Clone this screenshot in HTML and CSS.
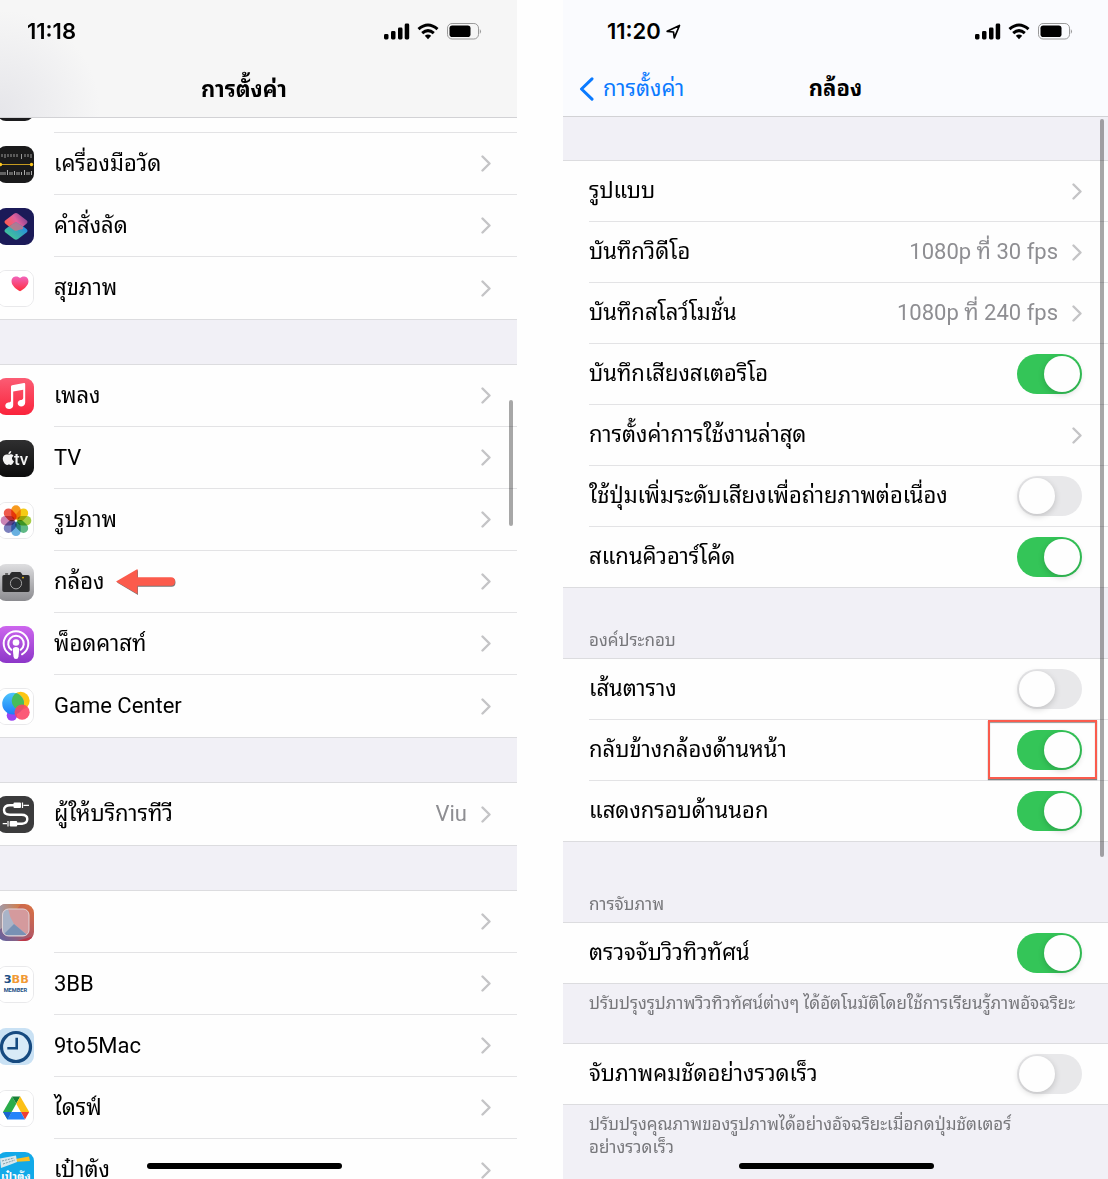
FILE: index.html
```html
<!DOCTYPE html>
<html lang="th">
<head>
    <meta charset="UTF-8">
    <meta name="viewport" content="width=device-width, initial-scale=1.0">
    <title>การตั้งค่ากล้อง</title>
    <link rel="stylesheet" href="styles.css">
</head>
<body>
    <!-- shared symbols -->
    <svg class="defs" width="0" height="0" aria-hidden="true">
        <symbol id="status" viewBox="0 0 98 18">
            <rect x="0" y="12" width="4.500" height="5.500" rx="1.400"/>
            <rect x="7" y="9" width="4.500" height="8.500" rx="1.400"/>
            <rect x="14" y="5.500" width="4.500" height="12" rx="1.400"/>
            <rect x="20.700" y="1.500" width="4.500" height="16" rx="1.400"/>
            <g fill="none" stroke="#000" stroke-width="3">
                <path d="M34.500 7.200Q44 -1.200 53.500 7.200"/>
                <path d="M38.200 11.100Q44 6.100 49.800 11.100"/>
            </g>
            <path d="M40.800 13.700Q44 11.200 47.200 13.700L44 17.300Z"/>
            <rect x="63.500" y="1.500" width="31" height="15.500" rx="4.600" fill="none" stroke="#999"/>
            <rect x="65.500" y="3.500" width="21" height="11.500" rx="2.800"/>
            <path d="M95.800 7Q98.200 9.500 95.800 12Z" fill="#999"/>
        </symbol>
        <symbol id="chevron" viewBox="0 0 10 17">
            <path d="M1.500 1.500L8.500 8.500L1.500 15.500" fill="none" stroke="#c4c4c6" stroke-width="2.400" stroke-linecap="round" stroke-linejoin="round"/>
        </symbol>
    </svg>

    <!-- main settings list -->
    <section class="phone phone-list">
        <header class="topbar">
            <div class="status">
                <span class="time">11:18</span>
                <svg class="status-icons" aria-hidden="true"><use href="#status"/></svg>
            </div>
            <div class="nav"><h1>การตั้งค่า</h1></div>
        </header>
        <nav class="content">
            <ul class="group group-first">
                <li class="row">
                    <svg class="app-icon" viewBox="0 0 37 37"><rect width="37" height="37" fill="#1c1c1e"/></svg>
                    <div class="cell"></div>
                </li>
                <li class="row">
                    <svg class="app-icon" viewBox="0 0 37 37">
                        <rect width="37" height="37" fill="#1a1a1b"/>
                        <path d="M5 8v3M8 8v4M11 8v3M14 8v3M17 8v3M20 8v3M24.500 8v5M28 8v3M31 8v3M34 8v4" stroke="#999"/>
                        <path d="M3 18.500H35" stroke="#c59a20" stroke-width="1"/>
                        <circle cx="3.500" cy="18.500" r="1.700" fill="#ffc81f"/>
                        <circle cx="34.500" cy="18.500" r="1.700" fill="#ffc81f"/>
                        <path d="M4 26v3M6 26v3M8 26v3M10.500 24v5M13 26v3M15 26v3M17.500 25v4M20 26v3M22 26v3M24.500 26v3M27.500 24v5M30 26v3M32 26v3M34.500 25v4" stroke="#aaa"/>
                    </svg>
                    <a class="cell" href="#">เครื่องมือวัด<svg class="chevron"><use href="#chevron"/></svg></a>
                </li>
                <li class="row">
                    <svg class="app-icon" viewBox="0 0 37 37">
                        <defs>
                            <linearGradient id="sc1" x1="0" y1=".7" x2="1" y2=".3"><stop offset="0" stop-color="#ff5a50"/><stop offset=".5" stop-color="#e0609d"/><stop offset="1" stop-color="#7a3f90"/></linearGradient>
                            <linearGradient id="sc2" x1="0" y1="1" x2="1" y2="0"><stop offset="0" stop-color="#4ad38b"/><stop offset=".5" stop-color="#35a8b8"/><stop offset="1" stop-color="#1b7bff"/></linearGradient>
                        </defs>
                        <rect width="37" height="37" fill="#1b1a58"/>
                        <path d="M17 14.500Q19 13 21 14.500L29.500 21Q31.500 22.800 29.500 24.500L21 31Q19 32.500 17 31L8.500 24.500Q6.500 22.800 8.500 21Z" fill="url(#sc2)"/>
                        <path d="M17 5.800Q19 4.300 21 5.800L29.500 12.300Q31.500 14 29.500 15.800L26 18.500L19 14L12 18.500L8.500 15.800Q6.500 14 8.500 12.300Z" fill="url(#sc1)"/>
                        <path d="M12 18.500L19 14L26 18.500L26 21L21 22.300Q19 23.300 17 22.300Z" fill="#d9707f" opacity=".75"/>
                    </svg>
                    <a class="cell" href="#">คำสั่งลัด<svg class="chevron"><use href="#chevron"/></svg></a>
                </li>
                <li class="row">
                    <svg class="app-icon light" viewBox="0 0 37 37">
                        <defs><linearGradient id="ht" x2="0" y2="1"><stop offset="0" stop-color="#f165bb"/><stop offset="1" stop-color="#ff2d3d"/></linearGradient></defs>
                        <rect width="37" height="37" fill="#fff"/>
                        <path d="M23.300 7.500C25.500 4.800 32 5 32.200 10.800C32.200 15.500 27 19.300 23.300 21.300C19.500 19.300 14.300 15.500 14.300 10.800C14.500 5 21 4.800 23.300 7.500Z" fill="url(#ht)"/>
                    </svg>
                    <a class="cell" href="#">สุขภาพ<svg class="chevron"><use href="#chevron"/></svg></a>
                </li>
            </ul>

            <ul class="group">
                <li class="row">
                    <svg class="app-icon" viewBox="0 0 37 37">
                        <defs><linearGradient id="mu" x2="0" y2="1"><stop offset="0" stop-color="#fb5c74"/><stop offset="1" stop-color="#fa233b"/></linearGradient></defs>
                        <rect width="37" height="37" fill="url(#mu)"/>
                        <path d="M14 8.500Q14 7.500 15 7.300L27 5.100Q28.200 5 28.200 6.200V24.500C28.200 29.500 20.700 29.600 20.700 25.300C20.700 22.500 23.500 22 25 21.700Q26.200 21.400 26.200 20V11.800L16.200 13.600V27.300C16.200 32.300 8.300 32 8.300 27.800C8.300 25 11 24.500 12.700 24.200Q14 24 14 22.500Z" fill="#fff"/>
                    </svg>
                    <a class="cell" href="#">เพลง<svg class="chevron"><use href="#chevron"/></svg></a>
                </li>
                <li class="row">
                    <svg class="app-icon" viewBox="0 0 37 37">
                        <defs><linearGradient id="tv" x2="0" y2="1"><stop offset="0" stop-color="#2f2f30"/><stop offset="1" stop-color="#0c0c0c"/></linearGradient></defs>
                        <rect width="37" height="37" fill="url(#tv)"/>
                        <path d="M11.800 14.800C13 14.200 15.200 13.900 16.500 15.800C14.300 17.400 14.600 20 17 21.200C16 23.800 14.600 25.200 13.300 24.900C12.200 24.500 11.700 24.500 10.500 24.900C8.500 25.500 5.700 21.500 5.800 18.500C6 14.700 9.200 13.800 11.800 14.800ZM11.400 14.200C11.300 12.500 12.500 11.200 14.200 11C14.400 12.700 13.100 14.200 11.400 14.200Z" fill="#f3f3f3"/>
                        <text class="tv-text" x="17" y="25">tv</text>
                    </svg>
                    <a class="cell" href="#">TV<svg class="chevron"><use href="#chevron"/></svg></a>
                </li>
                <li class="row">
                    <svg class="app-icon light" viewBox="0 0 37 37">
                        <rect width="37" height="37" fill="#fff"/>
                        <g class="petals">
                            <rect x="14" y="2.500" width="10" height="15" rx="5" fill="#f79a1e"/>
                            <rect x="14" y="2.500" width="10" height="15" rx="5" fill="#f5cb15" transform="rotate(45 19 18.700)"/>
                            <rect x="14" y="2.500" width="10" height="15" rx="5" fill="#a5cd45" transform="rotate(90 19 18.700)"/>
                            <rect x="14" y="2.500" width="10" height="15" rx="5" fill="#5fb985" transform="rotate(135 19 18.700)"/>
                            <rect x="14" y="2.500" width="10" height="15" rx="5" fill="#68b0e0" transform="rotate(180 19 18.700)"/>
                            <rect x="14" y="2.500" width="10" height="15" rx="5" fill="#7b80bd" transform="rotate(225 19 18.700)"/>
                            <rect x="14" y="2.500" width="10" height="15" rx="5" fill="#cb84b5" transform="rotate(270 19 18.700)"/>
                            <rect x="14" y="2.500" width="10" height="15" rx="5" fill="#ee5a4c" transform="rotate(315 19 18.700)"/>
                        </g>
                    </svg>
                    <a class="cell" href="#">รูปภาพ<svg class="chevron"><use href="#chevron"/></svg></a>
                </li>
                <li class="row">
                    <svg class="app-icon" viewBox="0 0 37 37">
                        <defs><linearGradient id="cm" x2="0" y2="1"><stop offset="0" stop-color="#dedee0"/><stop offset="1" stop-color="#8b8b8f"/></linearGradient></defs>
                        <rect width="37" height="37" fill="url(#cm)"/>
                        <path d="M7 11Q5.300 11 5.300 12.700V26.300Q5.300 28 7 28H31Q32.700 28 32.700 26.300V12.700Q32.700 11 31 11H25.500L24.300 9Q23.800 8 22.500 8H15.500Q14.200 8 13.700 9L12.500 11Z" fill="#2b2b2c"/>
                        <rect x="8" y="9.300" width="3.200" height="1.400" rx=".6" fill="#444"/>
                        <circle cx="19" cy="19.300" r="5.600" fill="none" stroke="#a5a5a5"/>
                        <circle cx="26" cy="13.600" r=".9" fill="#f5c518"/>
                    </svg>
                    <a class="cell" href="#">กล้อง
                        <svg class="arrow" viewBox="0 0 60 28" aria-hidden="true">
                            <path d="M1 14.500L22 2V10.300H55.500Q59.500 10.300 59.500 14.500T55.500 18.700H22V27Z" fill="#777"/>
                            <path d="M0 13.500L21.500 1V9.300H55Q59 9.300 59 13.500T55 17.700H21.500V26Z" fill="#fb5b4c"/>
                        </svg>
                        <svg class="chevron"><use href="#chevron"/></svg>
                    </a>
                </li>
                <li class="row">
                    <svg class="app-icon" viewBox="0 0 37 37">
                        <defs><linearGradient id="pc" x2="0" y2="1"><stop offset="0" stop-color="#cd66ee"/><stop offset="1" stop-color="#8c36c8"/></linearGradient></defs>
                        <rect width="37" height="37" fill="url(#pc)"/>
                        <path d="M13 28.300A12.300 12.300 0 1 1 25 28.300M14.300 23.800A7.800 7.800 0 1 1 23.700 23.800" fill="none" stroke="#fff" stroke-width="2" stroke-linecap="round"/>
                        <circle cx="19" cy="16.500" r="3.300" fill="#fff"/>
                        <path d="M15.800 23.500Q15.800 21 19 21T22.200 23.500L21.500 30.500Q21.200 33 19 33T16.500 30.500Z" fill="#fff"/>
                    </svg>
                    <a class="cell" href="#">พ็อดคาสท์<svg class="chevron"><use href="#chevron"/></svg></a>
                </li>
                <li class="row">
                    <svg class="app-icon light" viewBox="0 0 37 37">
                        <defs>
                            <linearGradient id="g1" x2="0" y2="1"><stop offset="0" stop-color="#4dc5fc"/><stop offset="1" stop-color="#1c7cf9"/></linearGradient>
                            <clipPath id="gc"><circle cx="16" cy="15.500" r="11.500"/></clipPath>
                        </defs>
                        <rect width="37" height="37" fill="#fff"/>
                        <circle cx="14.700" cy="28" r="5.500" fill="#9b45f2"/>
                        <circle cx="24" cy="12.500" r="9.500" fill="#fcc512"/>
                        <circle cx="16" cy="15.500" r="11.500" fill="url(#g1)"/>
                        <circle cx="24" cy="12.500" r="9.500" fill="#46bd5b" clip-path="url(#gc)"/>
                        <circle cx="25.500" cy="24.500" r="8" fill="#fb4264" opacity=".88"/>
                    </svg>
                    <a class="cell" href="#">Game Center<svg class="chevron"><use href="#chevron"/></svg></a>
                </li>
            </ul>

            <ul class="group">
                <li class="row">
                    <svg class="app-icon" viewBox="0 0 37 37">
                        <rect width="37" height="37" fill="#3b3b3c"/>
                        <path d="M17 9.300H13Q7 9.300 7 14T13 18.700H24.500Q30.300 18.700 30.300 23T25 27.700H20" fill="none" stroke="#fff" stroke-width="2.400"/>
                        <rect x="16.500" y="6.500" width="7.500" height="5.600" rx="1" fill="#fff"/>
                        <path d="M25.500 6.500V12.100M26.500 9.300H32M5.700 27.700H10" stroke="#fff" stroke-width="1.200"/>
                        <rect x="12.700" y="24.900" width="7.500" height="5.600" rx="1" fill="#fff"/>
                        <path d="M11 24.900V30.500" stroke="#fff" stroke-width="1.200"/>
                    </svg>
                    <a class="cell" href="#">ผู้ให้บริการทีวี<span class="value">Viu</span><svg class="chevron"><use href="#chevron"/></svg></a>
                </li>
            </ul>

            <ul class="group">
                <li class="row">
                    <svg class="app-icon" viewBox="0 0 37 37">
                        <defs>
                            <linearGradient id="b1" x1="0" y1="1" x2="1" y2="0"><stop offset="0" stop-color="#5a66a8"/><stop offset=".55" stop-color="#b55a62"/><stop offset="1" stop-color="#dd7440"/></linearGradient>
                            <linearGradient id="b2" x1="0" y1="0" x2="1" y2="0"><stop offset="0" stop-color="#9a9fb4"/><stop offset="1" stop-color="#d67a44"/></linearGradient>
                            <clipPath id="bc"><rect x="5.500" y="5" width="26.500" height="27" rx="6"/></clipPath>
                        </defs>
                        <rect width="37" height="37" fill="url(#b1)"/>
                        <path d="M0 0H24L5 24L0 28Z" fill="url(#b2)"/>
                        <path d="M37 16V37H20L37 32Z" fill="#bd3848"/>
                        <g clip-path="url(#bc)">
                            <rect width="37" height="37" fill="#d49a9d"/>
                            <path d="M5 4H11Q12 12 17 20L33 33H5Z" fill="#a9b4c8"/>
                            <path d="M17 20L6 31H30Z" fill="#7891b4"/>
                        </g>
                        <rect x="5.500" y="5" width="26.500" height="27" rx="6" fill="none" stroke="#e0d4d8"/>
                    </svg>
                    <a class="cell" href="#"><svg class="chevron"><use href="#chevron"/></svg></a>
                </li>
                <li class="row">
                    <svg class="app-icon light" viewBox="0 0 37 37">
                        <rect width="37" height="37" fill="#fff"/>
                        <text class="bb" x="6" y="17">3<tspan class="bb-orange">BB</tspan></text>
                        <text class="bb-member" x="6" y="26">MEMBER</text>
                    </svg>
                    <a class="cell" href="#">3BB<svg class="chevron"><use href="#chevron"/></svg></a>
                </li>
                <li class="row">
                    <svg class="app-icon" viewBox="0 0 37 37">
                        <rect width="37" height="37" fill="#c9e1f4"/>
                        <circle cx="19" cy="19" r="14.500" fill="#d8eaf7" stroke="#164a80" stroke-width="3.200"/>
                        <path d="M19.700 9.700V20.300H10.300" fill="none" stroke="#164a80" stroke-width="2.600"/>
                    </svg>
                    <a class="cell" href="#">9to5Mac<svg class="chevron"><use href="#chevron"/></svg></a>
                </li>
                <li class="row">
                    <svg class="app-icon light" viewBox="0 0 37 37">
                        <rect width="37" height="37" fill="#fff"/>
                        <path d="M14.800 5.700L19.300 13.500L10 30L5.300 22.300Z" fill="#2bac4a"/>
                        <path d="M14.800 5.700H23.500L19.300 13.500Z" fill="#178038"/>
                        <path d="M23.500 5.700L33 22.300H24.200L19.300 13.500Z" fill="#fcc016"/>
                        <path d="M24.200 22.300H33L28.500 30Z" fill="#ee4035"/>
                        <path d="M14.300 22.300H24.200L28.500 30H10Z" fill="#2483fa"/>
                        <path d="M5.300 22.300H14.300L10 30Z" fill="#1a66d2"/>
                    </svg>
                    <a class="cell" href="#">ไดรฟ์<svg class="chevron"><use href="#chevron"/></svg></a>
                </li>
                <li class="row">
                    <svg class="app-icon" viewBox="0 0 37 37">
                        <rect width="37" height="37" fill="#12a9e8"/>
                        <path d="M13 8L32 4.500L33 9L16 10Z" fill="#fbbf24"/>
                        <path d="M3 6.500L19 3.500L20 10L15 12L4 16Z" fill="#d9e7ec"/>
                        <path d="M5 9L17 6M6 12L18 8" stroke="#7f9aa6" stroke-dasharray="2 1"/>
                        <text class="pt-text" x="4" y="28">เป๋าตัง</text>
                    </svg>
                    <a class="cell" href="#">เป๋าตัง<svg class="chevron"><use href="#chevron"/></svg></a>
                </li>
            </ul>
        </nav>
        <div class="scrollbar scrollbar-list"></div>
        <div class="home-bar"></div>
    </section>

    <!-- camera settings -->
    <section class="phone phone-camera">
        <header class="topbar">
            <div class="status">
                <span class="time">11:20
                    <svg class="location" viewBox="0 0 15 15"><path d="M1.200 7.300L13.500 1.500L8.300 13.800L7.500 8Z" fill="none" stroke="#000" stroke-width="1.700" stroke-linejoin="round"/></svg>
                </span>
                <svg class="status-icons" aria-hidden="true"><use href="#status"/></svg>
            </div>
            <div class="nav">
                <a class="back" href="#">
                    <svg class="back-icon" viewBox="0 0 15 24"><path d="M13 1.800L2.500 12L13 22.200" fill="none" stroke="#0a7aff" stroke-width="3" stroke-linecap="round" stroke-linejoin="round"/></svg>การตั้งค่า
                </a>
                <h1>กล้อง</h1>
            </div>
        </header>
        <main class="content">
            <ul class="group group-first">
                <li class="row"><a class="cell" href="#">รูปแบบ<svg class="chevron"><use href="#chevron"/></svg></a></li>
                <li class="row"><a class="cell" href="#">บันทึกวิดีโอ<span class="value">1080p ที่ 30 fps</span><svg class="chevron"><use href="#chevron"/></svg></a></li>
                <li class="row"><a class="cell" href="#">บันทึกสโลว์โมชั่น<span class="value">1080p ที่ 240 fps</span><svg class="chevron"><use href="#chevron"/></svg></a></li>
                <li class="row"><label class="cell">บันทึกเสียงสเตอริโอ<input class="toggle" type="checkbox" checked></label></li>
                <li class="row"><a class="cell" href="#">การตั้งค่าการใช้งานล่าสุด<svg class="chevron"><use href="#chevron"/></svg></a></li>
                <li class="row"><label class="cell">ใช้ปุ่มเพิ่มระดับเสียงเพื่อถ่ายภาพต่อเนื่อง<input class="toggle" type="checkbox"></label></li>
                <li class="row"><label class="cell">สแกนคิวอาร์โค้ด<input class="toggle" type="checkbox" checked></label></li>
            </ul>

            <h2 class="group-title">องค์ประกอบ</h2>
            <ul class="group">
                <li class="row"><label class="cell">เส้นตาราง<input class="toggle" type="checkbox"></label></li>
                <li class="row marked"><label class="cell">กลับข้างกล้องด้านหน้า<input class="toggle" type="checkbox" checked></label></li>
                <li class="row"><label class="cell">แสดงกรอบด้านนอก<input class="toggle" type="checkbox" checked></label></li>
            </ul>

            <h2 class="group-title group-title-spaced">การจับภาพ</h2>
            <ul class="group">
                <li class="row"><label class="cell">ตรวจจับวิวทิวทัศน์<input class="toggle" type="checkbox" checked></label></li>
            </ul>
            <p class="note">ปรับปรุงรูปภาพวิวทิวทัศน์ต่างๆ ได้อัตโนมัติโดยใช้การเรียนรู้ภาพอัจฉริยะ</p>

            <ul class="group">
                <li class="row"><label class="cell">จับภาพคมชัดอย่างรวดเร็ว<input class="toggle" type="checkbox"></label></li>
            </ul>
            <p class="note">ปรับปรุงคุณภาพของรูปภาพได้อย่างอัจฉริยะเมื่อกดปุ่มชัตเตอร์<br>อย่างรวดเร็ว</p>
        </main>
        <div class="scrollbar scrollbar-camera"></div>
        <div class="home-bar"></div>
    </section>
</body>
</html>
```
FILE: styles.css
```css
*,
*::before,
*::after {
    box-sizing: border-box;
}
body {
    margin: 0;
    height: 100vh;
    overflow: hidden;
    display: grid;
    grid-template-columns: 517fr 545fr;
    grid-template-rows: 100%;
    column-gap: 46px;
    background-color: #fefefe;
    color: #000;
    font-family: Roboto, "Noto Sans Thai Looped", Loma, "Noto Sans", sans-serif;
    font-size: 22px;
    line-height: 28px;
}
a {
    color: inherit;
    text-decoration: none;
}
.defs {
    position: absolute;
}
.phone {
    position: relative;
    overflow: hidden;
    background-color: #f1f0f6;
}

/* top bar */
.topbar {
    position: relative;
    z-index: 1;
    display: grid;
    grid-template-rows: 62px 1fr;
    border-bottom: 1px solid #d2d2d5;
}
.phone-list .topbar {
    height: 118px;
    background: radial-gradient(circle at 0 110px, #e6e6ea, #f6f6f6 100px);
}
.phone-camera .topbar {
    height: 117px;
    background-color: #fafbfe;
}
.status {
    display: flex;
    align-items: center;
    justify-content: space-between;
    padding: 0 35px 0 27px;
}
.phone-camera .status {
    padding-left: 44px;
}
.time {
    font-family: Inter, sans-serif;
    font-weight: 600;
}
.location {
    width: 15px;
    height: 15px;
}
.status-icons {
    width: 98px;
    height: 18px;
}
.nav {
    display: grid;
    grid-template-columns: 1fr auto 1fr;
    align-items: center;
}
.phone-list .nav {
    padding-right: 29px;
}
.nav h1 {
    grid-column: 2;
    margin: 0;
    font-size: 22px;
    font-weight: 700;
    line-height: 28px;
}
.back {
    display: flex;
    align-items: center;
    gap: 9px;
    padding-left: 16px;
    color: #0a7aff;
}
.back-icon {
    width: 15px;
    height: 24px;
}

/* grouped rows */
.group {
    margin: 0 0 44px;
    padding: 0;
    list-style: none;
    background-color: #fefefe;
    border-top: 1px solid #dcdcdf;
}
.phone-list .group {
    border-bottom: 1px solid #dcdcdf;
}
.phone-list .group-first {
    margin-top: -48px;
}
.phone-camera .group {
    margin: 0;
}
.phone-camera .group-first {
    margin-top: 43px;
}
.row {
    position: relative;
    display: flex;
    align-items: center;
    height: 62px;
}
.phone-camera .row {
    height: 61px;
    padding-left: 26px;
}
.cell {
    flex: 1;
    align-self: stretch;
    display: flex;
    align-items: center;
    padding-right: 26px;
    border-bottom: 1px solid #e3e3e5;
    white-space: nowrap;
}
.phone-list .row:last-child .cell {
    border-bottom: 0;
}
.phone-camera .row:last-child {
    border-bottom: 1px solid #dcdcdf;
}
.phone-camera .row:last-child .cell {
    border-bottom: 0;
}
.app-icon {
    width: 37px;
    height: 37px;
    margin-left: -3px;
    margin-right: 20px;
    border-radius: 9px;
}
.app-icon.light {
    border: 1px solid #e9e9eb;
}
.petals rect {
    mix-blend-mode: multiply;
}
.chevron {
    width: 10px;
    height: 17px;
    margin-left: auto;
}
.value {
    margin-left: auto;
    color: #8e8e92;
}
.value + .chevron {
    margin-left: 14px;
}
.arrow {
    width: 60px;
    height: 28px;
    margin-left: 12px;
}

/* switches */
.toggle {
    appearance: none;
    width: 65px;
    height: 40px;
    margin: 0 0 0 auto;
    padding: 2px;
    border-radius: 20px;
    background-color: #e8e8ea;
}
.toggle::before {
    content: "";
    display: block;
    width: 36px;
    height: 36px;
    border-radius: 50%;
    background-color: #fefefe;
    box-shadow: 0 2px 6px rgba(0, 0, 0, 0.18);
}
.toggle:checked {
    background-color: #34c558;
}
.toggle:checked::before {
    margin-left: auto;
}
.marked::after {
    content: "";
    position: absolute;
    top: 0;
    right: 11px;
    width: 109px;
    height: 59px;
    border: 2px solid #fa5b4d;
    box-shadow: 0 1px 1px rgba(0, 0, 0, 0.5), inset 0 1px 1px rgba(0, 0, 0, 0.4);
    pointer-events: none;
}

/* section titles and notes */
.group-title {
    margin: 0;
    padding: 40px 26px 6px;
    color: #77777b;
    font-size: 17px;
    font-weight: 400;
    line-height: 24px;
}
.group-title-spaced {
    padding-top: 50px;
}
.note {
    min-height: 59px;
    margin: 0;
    padding: 8px 26px 0;
    color: #77777b;
    font-size: 17px;
    line-height: 23px;
    white-space: nowrap;
}

/* overlays */
.scrollbar {
    position: absolute;
    z-index: 2;
    right: 4px;
    width: 4px;
    border-radius: 2px;
    background-color: rgba(0, 0, 0, 0.34);
}
.scrollbar-list {
    top: 400px;
    height: 126px;
}
.scrollbar-camera {
    top: 119px;
    height: 738px;
}
.home-bar {
    position: absolute;
    bottom: 10px;
    left: 50%;
    width: 195px;
    height: 6px;
    margin-left: -97px;
    border-radius: 3px;
    background-color: #000;
}
.phone-list .home-bar {
    margin-left: -112px;
}

/* lettering inside app icons */
.tv-text {
    fill: #f3f3f3;
    font-size: 17px;
    font-weight: 500;
}
.bb {
    fill: #1d4f86;
    font-family: "DejaVu Sans", sans-serif;
    font-size: 12px;
    font-weight: 700;
}
.bb-orange {
    fill: #f19a35;
}
.bb-member {
    fill: #1d4f86;
    font-size: 6px;
    font-weight: 700;
}
.pt-text {
    fill: #fff;
    font-size: 11px;
    font-weight: 700;
}
```
